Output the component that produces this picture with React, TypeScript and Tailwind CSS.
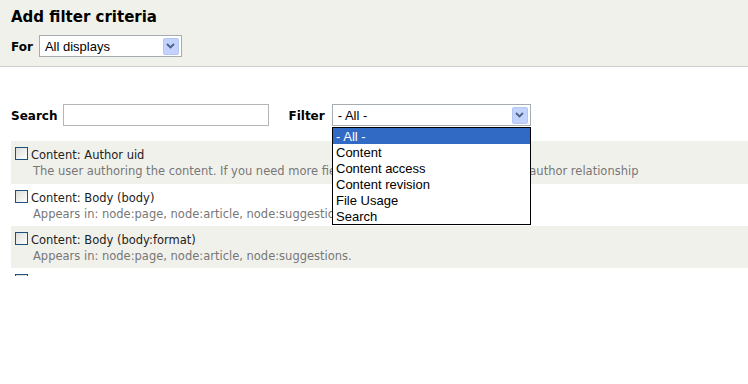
import React from "react";

const rows = [
  {
    label: "Content: Author uid",
    desc: "The user authoring the content. If you need more fields than the uid add the content: author relationship",
  },
  {
    label: "Content: Body (body)",
    desc: "Appears in: node:page, node:article, node:suggestions.",
  },
  {
    label: "Content: Body (body:format)",
    desc: "Appears in: node:page, node:article, node:suggestions.",
  },
  {
    label: "Content: Body (body:summary)",
    desc: "Appears in: node:page, node:article, node:suggestions.",
  },
];

const options = ["- All -", "Content", "Content access", "Content revision", "File Usage", "Search"];

function SelectArrow() {
  return (
    <div className="w-[16px] h-[17px] rounded-[2px] bg-[#c3d3fd] border border-[#b4c6f4] flex items-center justify-center">
      <svg width="9" height="6" viewBox="0 0 9 6">
        <path d="M1 1 L4.5 4.5 L8 1" fill="none" stroke="#4d6185" strokeWidth="1.8" />
      </svg>
    </div>
  );
}

function FakeSelect({ value, width }: { value: string; width: string }) {
  return (
    <div
      className={`${width} h-[22px] bg-white border border-[#a5acb2] flex items-center justify-between pl-[5px] pr-[2px] font-['Liberation_Sans',Arial,sans-serif] text-[13px] text-black`}
    >
      <span className="pt-[1px]">{value}</span>
      <SelectArrow />
    </div>
  );
}

export default function App() {
  return (
    <div className="w-[748px] h-[384px] bg-white relative overflow-hidden font-['DejaVu_Sans',Verdana,sans-serif] text-[#222]">
      {/* Header */}
      <div className="h-[67px] bg-[#f1f1ec] border-b border-[#cdcdcd] pl-[11px] pt-[7px]">
        <h1 className="text-[15px] font-bold text-black leading-[20px]">Add filter criteria</h1>
        <div className="flex items-center gap-[6px] mt-[8px]">
          <span className="text-[12px] font-bold text-black pt-[2px]">For</span>
          <FakeSelect value="All displays" width="w-[143px]" />
        </div>
      </div>

      {/* Search / filter */}
      <div className="pl-[11px] pt-[37px] flex items-center">
        <span className="text-[12px] font-bold text-black pt-[2px]">Search</span>
        <div className="ml-[6px] w-[206px] h-[22px] border border-[#b5b5b5] bg-white" />
        <span className="ml-[19px] text-[12px] font-bold text-black pt-[2px]">Filter</span>
        <div className="ml-[7px]">
          <FakeSelect value="- All -" width="w-[199px]" />
        </div>
      </div>

      {/* List */}
      <div className="ml-[11px] mt-[15px] h-[135px] overflow-hidden">
        {rows.map((r, i) => (
          <div
            key={r.label}
            className={`${i === 0 ? "h-[43px]" : "h-[42px]"} pl-[4px] pt-[6px] ${i % 2 === 0 ? "bg-[#f1f1ec]" : "bg-white"}`}
          >
            <div className="flex items-start gap-[3px] h-[16px]">
              <div className="w-[13px] h-[13px] border border-[#1c5180] bg-gradient-to-br from-[#dcdcd7] to-white" />
              <span className="text-[11.5px] leading-[15px] pt-[1px] text-[#222] whitespace-nowrap">{r.label}</span>
            </div>
            <div className="pl-[18px] text-[11.5px] text-[#777] whitespace-nowrap leading-[17px]">{r.desc}</div>
          </div>
        ))}
      </div>

      {/* Open dropdown */}
      <div className="absolute left-[332px] top-[127px] w-[199px] border border-black bg-white font-['Liberation_Sans',Arial,sans-serif] text-[13px] text-black">
        {options.map((o, i) => (
          <div
            key={o}
            className={`h-[16px] leading-[18px] pl-[3px] ${i === 0 ? "bg-[#316ac5] text-white" : ""}`}
          >
            {o}
          </div>
        ))}
      </div>
    </div>
  );
}
